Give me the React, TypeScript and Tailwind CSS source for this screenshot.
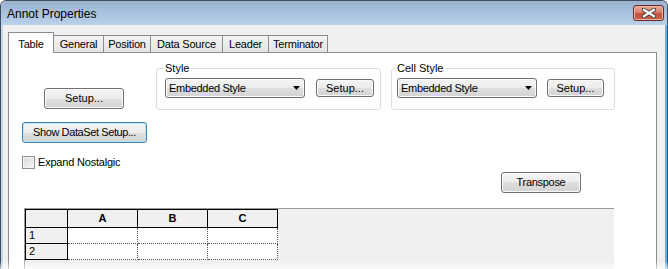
import React from "react";

const BTN =
  "flex items-center justify-center rounded-[3px] border border-[#707070] bg-[linear-gradient(#f4f4f4_0%,#ececec_50%,#dfdfdf_50%,#d3d3d3_100%)] shadow-[inset_0_0_0_1px_#fbfbfb] leading-none";

const tabs = [
  { label: "General", w: "w-[50px]" },
  { label: "Position", w: "w-[47px]" },
  { label: "Data Source", w: "w-[72px]" },
  { label: "Leader", w: "w-[46px]" },
  { label: "Terminator", w: "w-[59px]" },
];

function Combo() {
  return (
    <div className={BTN + " w-[140px] h-[20px] !justify-between pl-[3px] pr-[4px]"}>
      <span className="tracking-[-0.3px]">Embedded Style</span>
      <svg width="7" height="4" viewBox="0 0 7 4">
        <path d="M0 0h7L3.5 4z" fill="#000" />
      </svg>
    </div>
  );
}

function GroupBox({ title, w, pl, gap, btnW }: { title: string; w: string; pl: string; gap: string; btnW: string }) {
  return (
    <fieldset className={`${w} ${pl} pr-[4px] pt-[3px] pb-[11px] border border-[#d5dfe5] rounded-[3px]`}>
      <legend className="px-[2px] -ml-[2px] leading-[14px]">{title}</legend>
      <div className={`flex items-center ${gap}`}>
        <Combo />
        <button className={`${BTN} ${btnW} h-[18px]`}>Setup...</button>
      </div>
    </fieldset>
  );
}

function CloseButton() {
  return (
    <div className="w-[31px] h-[16px] rounded-[3px] border border-[#6b2a22] bg-[linear-gradient(#e7aa9c_0%,#d7806e_45%,#c4503a_55%,#c9614a_100%)] shadow-[inset_0_0_0_1px_#eab3a6] flex items-center justify-center">
      <svg width="14" height="10" viewBox="0 0 14 10">
        <path d="M1.5 1.5 L12.5 8.5 M12.5 1.5 L1.5 8.5" stroke="#3d3d3d" strokeWidth="4" strokeLinecap="square" />
        <path d="M2 1.8 L12 8.2 M12 1.8 L2 8.2" stroke="#ffffff" strokeWidth="2.2" strokeLinecap="square" />
      </svg>
    </div>
  );
}

export default function App() {
  return (
    <div className="relative w-[668px] h-[269px] overflow-hidden bg-white font-['Liberation_Sans',Arial,sans-serif] text-[11px] text-black">
      <div className="w-[668px] h-[269px] flex flex-col rounded-t-[6px] border-l border-r border-t border-[#3e4c5e] overflow-hidden">
        {/* title bar */}
        <div className="h-[24px] shrink-0 flex items-center justify-between pl-[6px] pr-[3px] bg-[linear-gradient(#98b2d0,#bad1ea)]">
          <span className="text-[12px] leading-none text-black mt-[1px]">Annot Properties</span>
          <CloseButton />
        </div>

        {/* body */}
        <div className="flex-1 flex flex-col bg-[#f0f0f0] border-l-2 border-r-2 border-l-[#c3d8ee] border-r-[#5fb3e6] pl-[5px] pr-[8px] pt-[7px]">
          {/* tabs */}
          <div className="relative z-10 h-[21px] flex items-end -mb-px tracking-[-0.2px]">
            <div className="w-[46px] h-[21px] bg-white border-l border-t border-r border-[#898c95] flex items-start justify-center pt-[3px]">
              Table
            </div>
            {tabs.map((t) => (
              <div
                key={t.label}
                className={`${t.w} h-[18px] border-t border-r border-b border-[#898c95] bg-[linear-gradient(#f3f3f3,#e4e4e4)] flex items-center justify-center`}
              >
                {t.label}
              </div>
            ))}
          </div>

          {/* panel */}
          <div className="flex-1 bg-white border border-[#898c95] pt-[8px]">
            <div className="flex items-start">
              <button className={`${BTN} ml-[35px] mt-[27px] w-[80px] h-[21px]`}>Setup...</button>
              <div className="ml-[32px]">
                <GroupBox title="Style" w="w-[225px]" pl="pl-[8px]" gap="gap-[11px]" btnW="w-[58px]" />
              </div>
              <div className="ml-[10px]">
                <GroupBox title="Cell Style" w="w-[224px]" pl="pl-[5px]" gap="gap-[10px]" btnW="w-[57px]" />
              </div>
            </div>

            <button
              className={`${BTN} !border-[#3c7fb1] !shadow-[inset_0_0_0_1px_#bfe7fb] ml-[13px] mt-[12px] w-[125px] h-[21px] tracking-[-0.4px]`}
            >
              Show DataSet Setup...
            </button>

            <div className="ml-[13px] mt-[13px] h-[13px] flex items-center gap-[3px]">
              <div className="w-[13px] h-[13px] border border-[#8e8f8f] bg-[linear-gradient(135deg,#d8d8d8,#f8f8f8)] shadow-[inset_0_0_0_1px_#f4f4f4]" />
              <span className="tracking-[-0.2px] leading-none">Expand Nostalgic</span>
            </div>

            <button className={`${BTN} ml-[492px] mt-[3px] w-[80px] h-[21px] tracking-[-0.3px]`}>Transpose</button>

            <div className="ml-[15px] mt-[15px] w-[590px] h-[70px] border-t border-l border-[#9a9a9a] bg-[#f0f0f0]">
              <div className="grid grid-cols-[43px_70px_70px_70px] w-max">
                <div className="h-[19px] border border-black bg-[#f0f0f0]" />
                {["A", "B", "C"].map((c) => (
                  <div
                    key={c}
                    className="h-[19px] border-t border-r border-b border-black bg-[#f0f0f0] flex items-center justify-center font-bold"
                  >
                    {c}
                  </div>
                ))}
                {["1", "2"].map((r) => (
                  <React.Fragment key={r}>
                    <div className="h-[16px] border-l border-r border-b border-black bg-[#f0f0f0] flex items-center pl-[3px]">
                      {r}
                    </div>
                    {[0, 1, 2].map((i) => (
                      <div key={i} className="h-[16px] bg-white border-r border-b border-dotted border-[#555555]" />
                    ))}
                  </React.Fragment>
                ))}
              </div>
            </div>
          </div>
        </div>
      </div>
      <div className="absolute inset-x-0 bottom-0 h-[8px] bg-linear-to-b from-white/0 to-white/70" />
    </div>
  );
}
